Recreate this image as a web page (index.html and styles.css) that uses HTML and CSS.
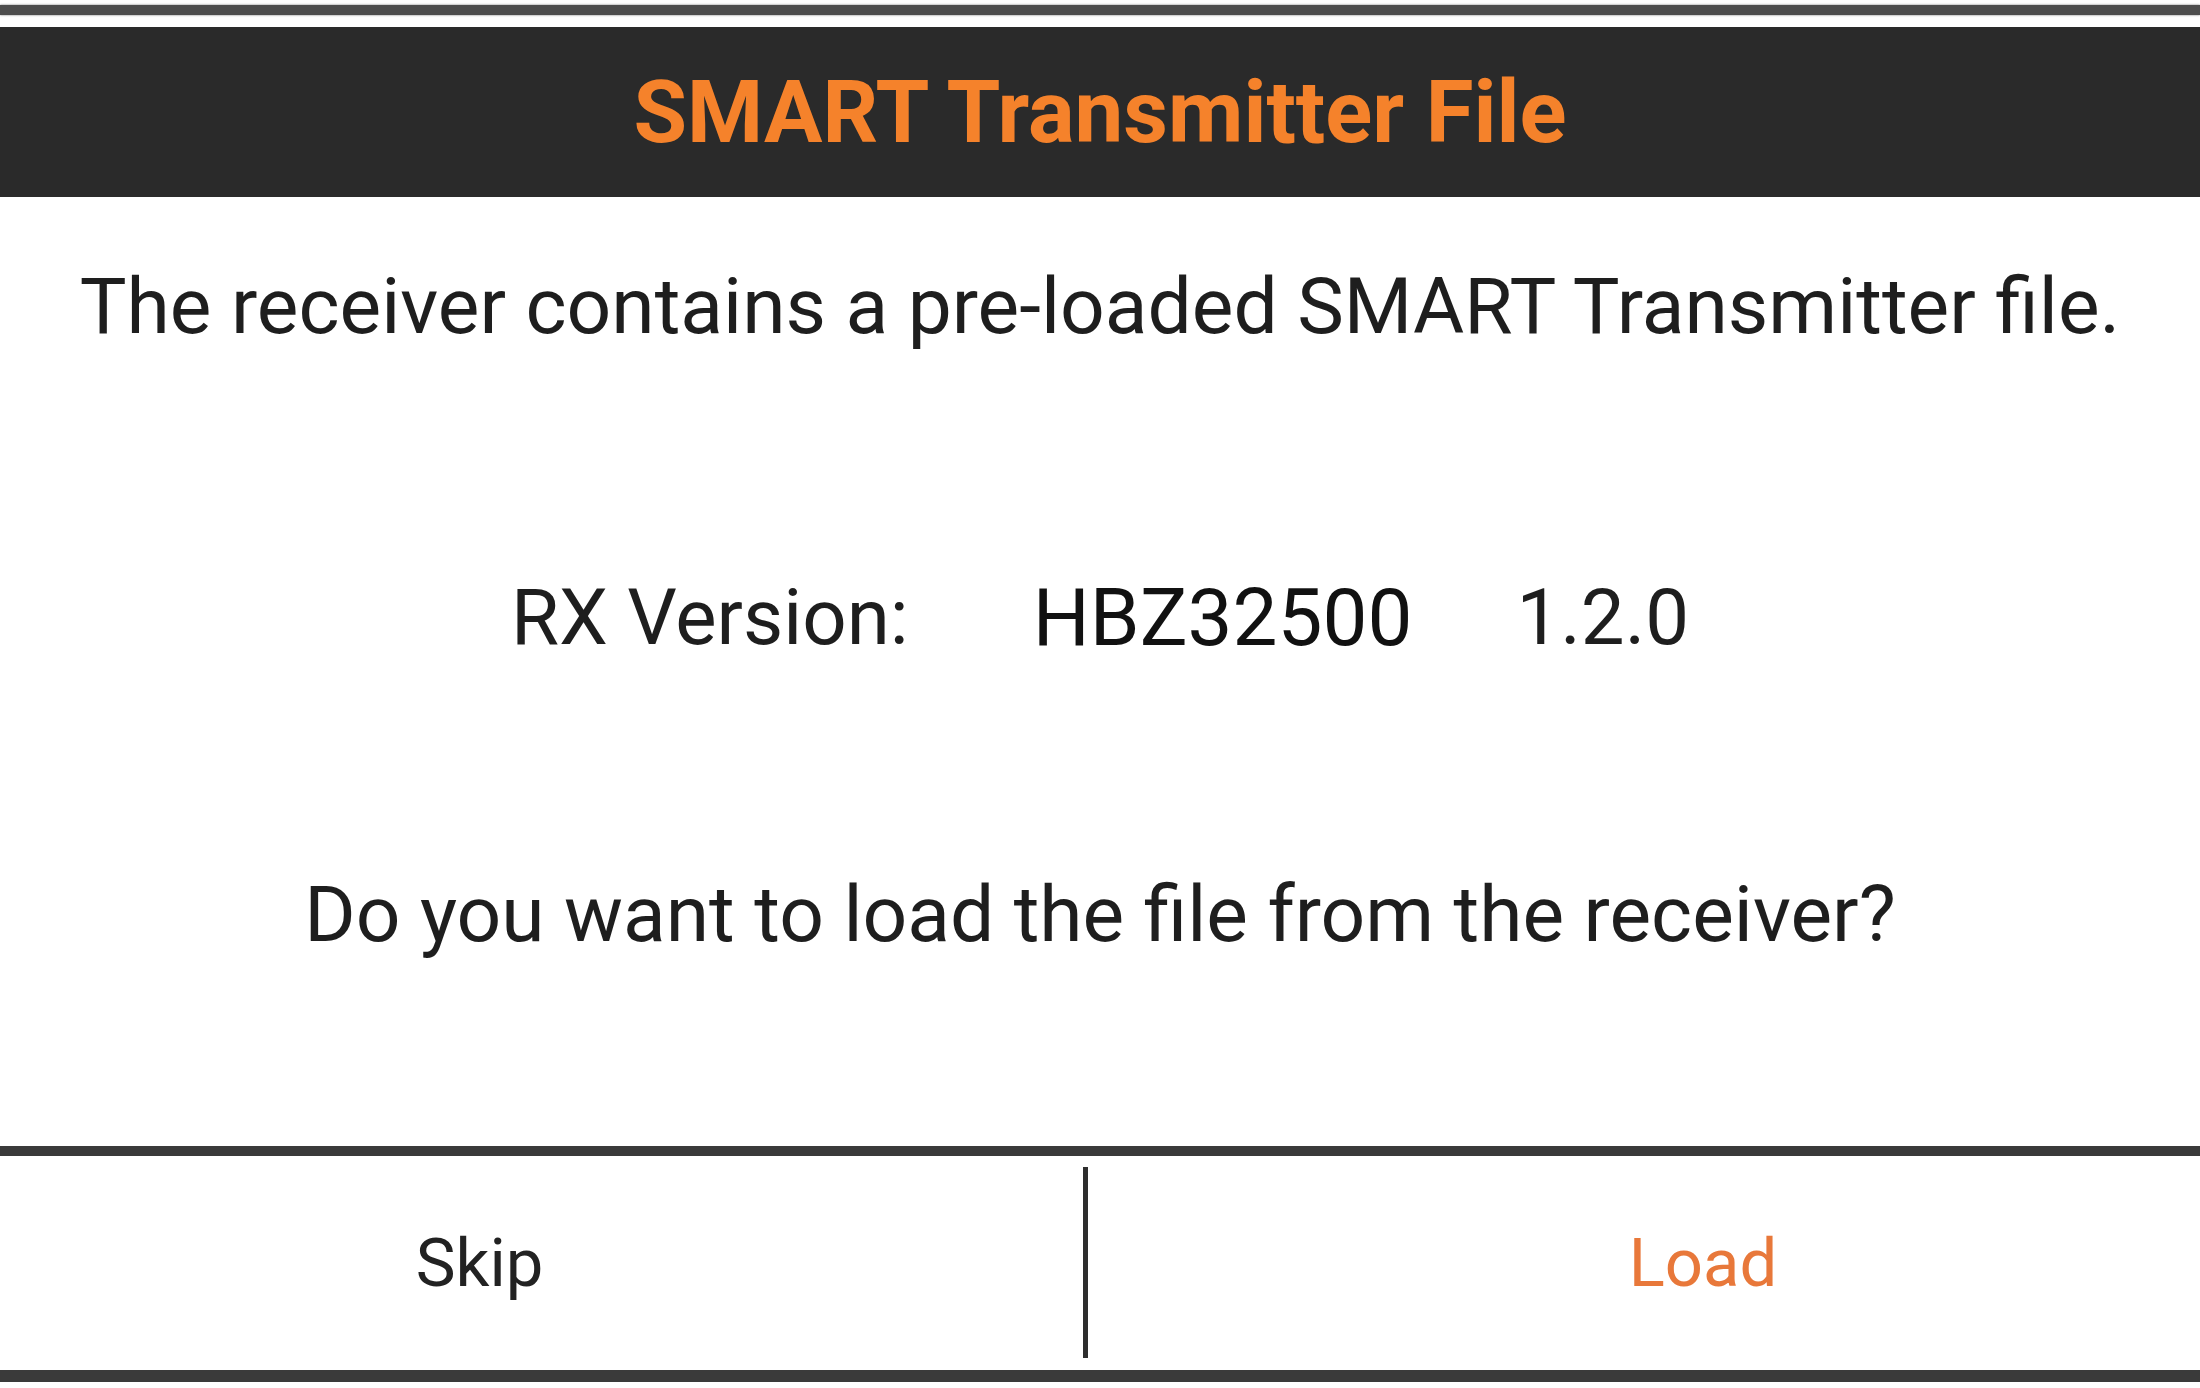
FILE: index.html
```html
<!DOCTYPE html>
<html lang="en">
<head>
  <meta charset="UTF-8">
  <title>SMART Transmitter File</title>
  <meta name="viewport" content="width=device-width, initial-scale=1">
  <link rel="stylesheet" href="styles.css">
</head>
<body>
  <div class="dialog">
    <div class="top-rule"></div>

    <header class="title-bar">
      <h1>SMART Transmitter File</h1>
    </header>

    <div class="content">
      <p class="notice">The receiver contains a pre-loaded SMART Transmitter file.</p>

      <div class="version-row">
        <span class="label">RX Version:</span>
        <span class="model">HBZ32500</span>
        <span class="ver">1.2.0</span>
      </div>

      <p class="question">Do you want to load the file from the receiver?</p>
    </div>

    <div class="actions">
      <button class="btn skip">Skip</button>
      <div class="divider"></div>
      <button class="btn load">Load</button>
    </div>
  </div>
</body>
</html>
```

FILE: styles.css
```css
body {
  margin: 0;
  background: #fff;
  font-family: Roboto, "Liberation Sans", sans-serif;
  color: #1e1e1e;
}

.dialog {
  width: 2200px;
  height: 1388px;
  display: flex;
  flex-direction: column;
}

.top-rule {
  height: 10px;
  margin-top: 5px;
  background: #4d4d4d;
  box-shadow: 0 0 2px #777;
}

.title-bar {
  margin-top: 12px;
  height: 170px;
  background: #2a2a2a;
  display: flex;
  align-items: center;
  justify-content: center;
}

h1 {
  margin: 0;
  font-size: 87px;
  font-weight: bold;
  color: #f5822b;
}

.content {
  height: 949px;
  display: flex;
  flex-direction: column;
  align-items: center;
  border-bottom: 10px solid #3a3a3a;
}

.notice,
.question {
  margin: 0;
  font-size: 78.5px;
  line-height: 100px;
}

.notice {
  margin-top: 59px;
}

.version-row {
  margin-top: 212px;
  font-size: 80px;
  line-height: 100px;
  display: flex;
}

.label {
  font-size: 78px;
}

.model {
  margin-left: 124px;
  color: #111;
}

.ver {
  margin-left: 104px;
  font-size: 78px;
}

.question {
  margin-top: 196px;
}

.actions {
  height: 214px;
  display: flex;
  align-items: stretch;
  border-bottom: 12px solid #3a3a3a;
}

.btn {
  box-sizing: border-box;
  border: none;
  background: none;
  font-family: inherit;
  font-size: 67px;
  padding: 0;
  cursor: pointer;
}

.skip {
  width: 1083px;
  color: #222;
  padding-right: 124px;
}

.load {
  flex: 1;
  color: #e8783a;
  padding-left: 118px;
}

.divider {
  width: 5px;
  margin: 11px 0 12px;
  background: #2e2e2e;
}
```
